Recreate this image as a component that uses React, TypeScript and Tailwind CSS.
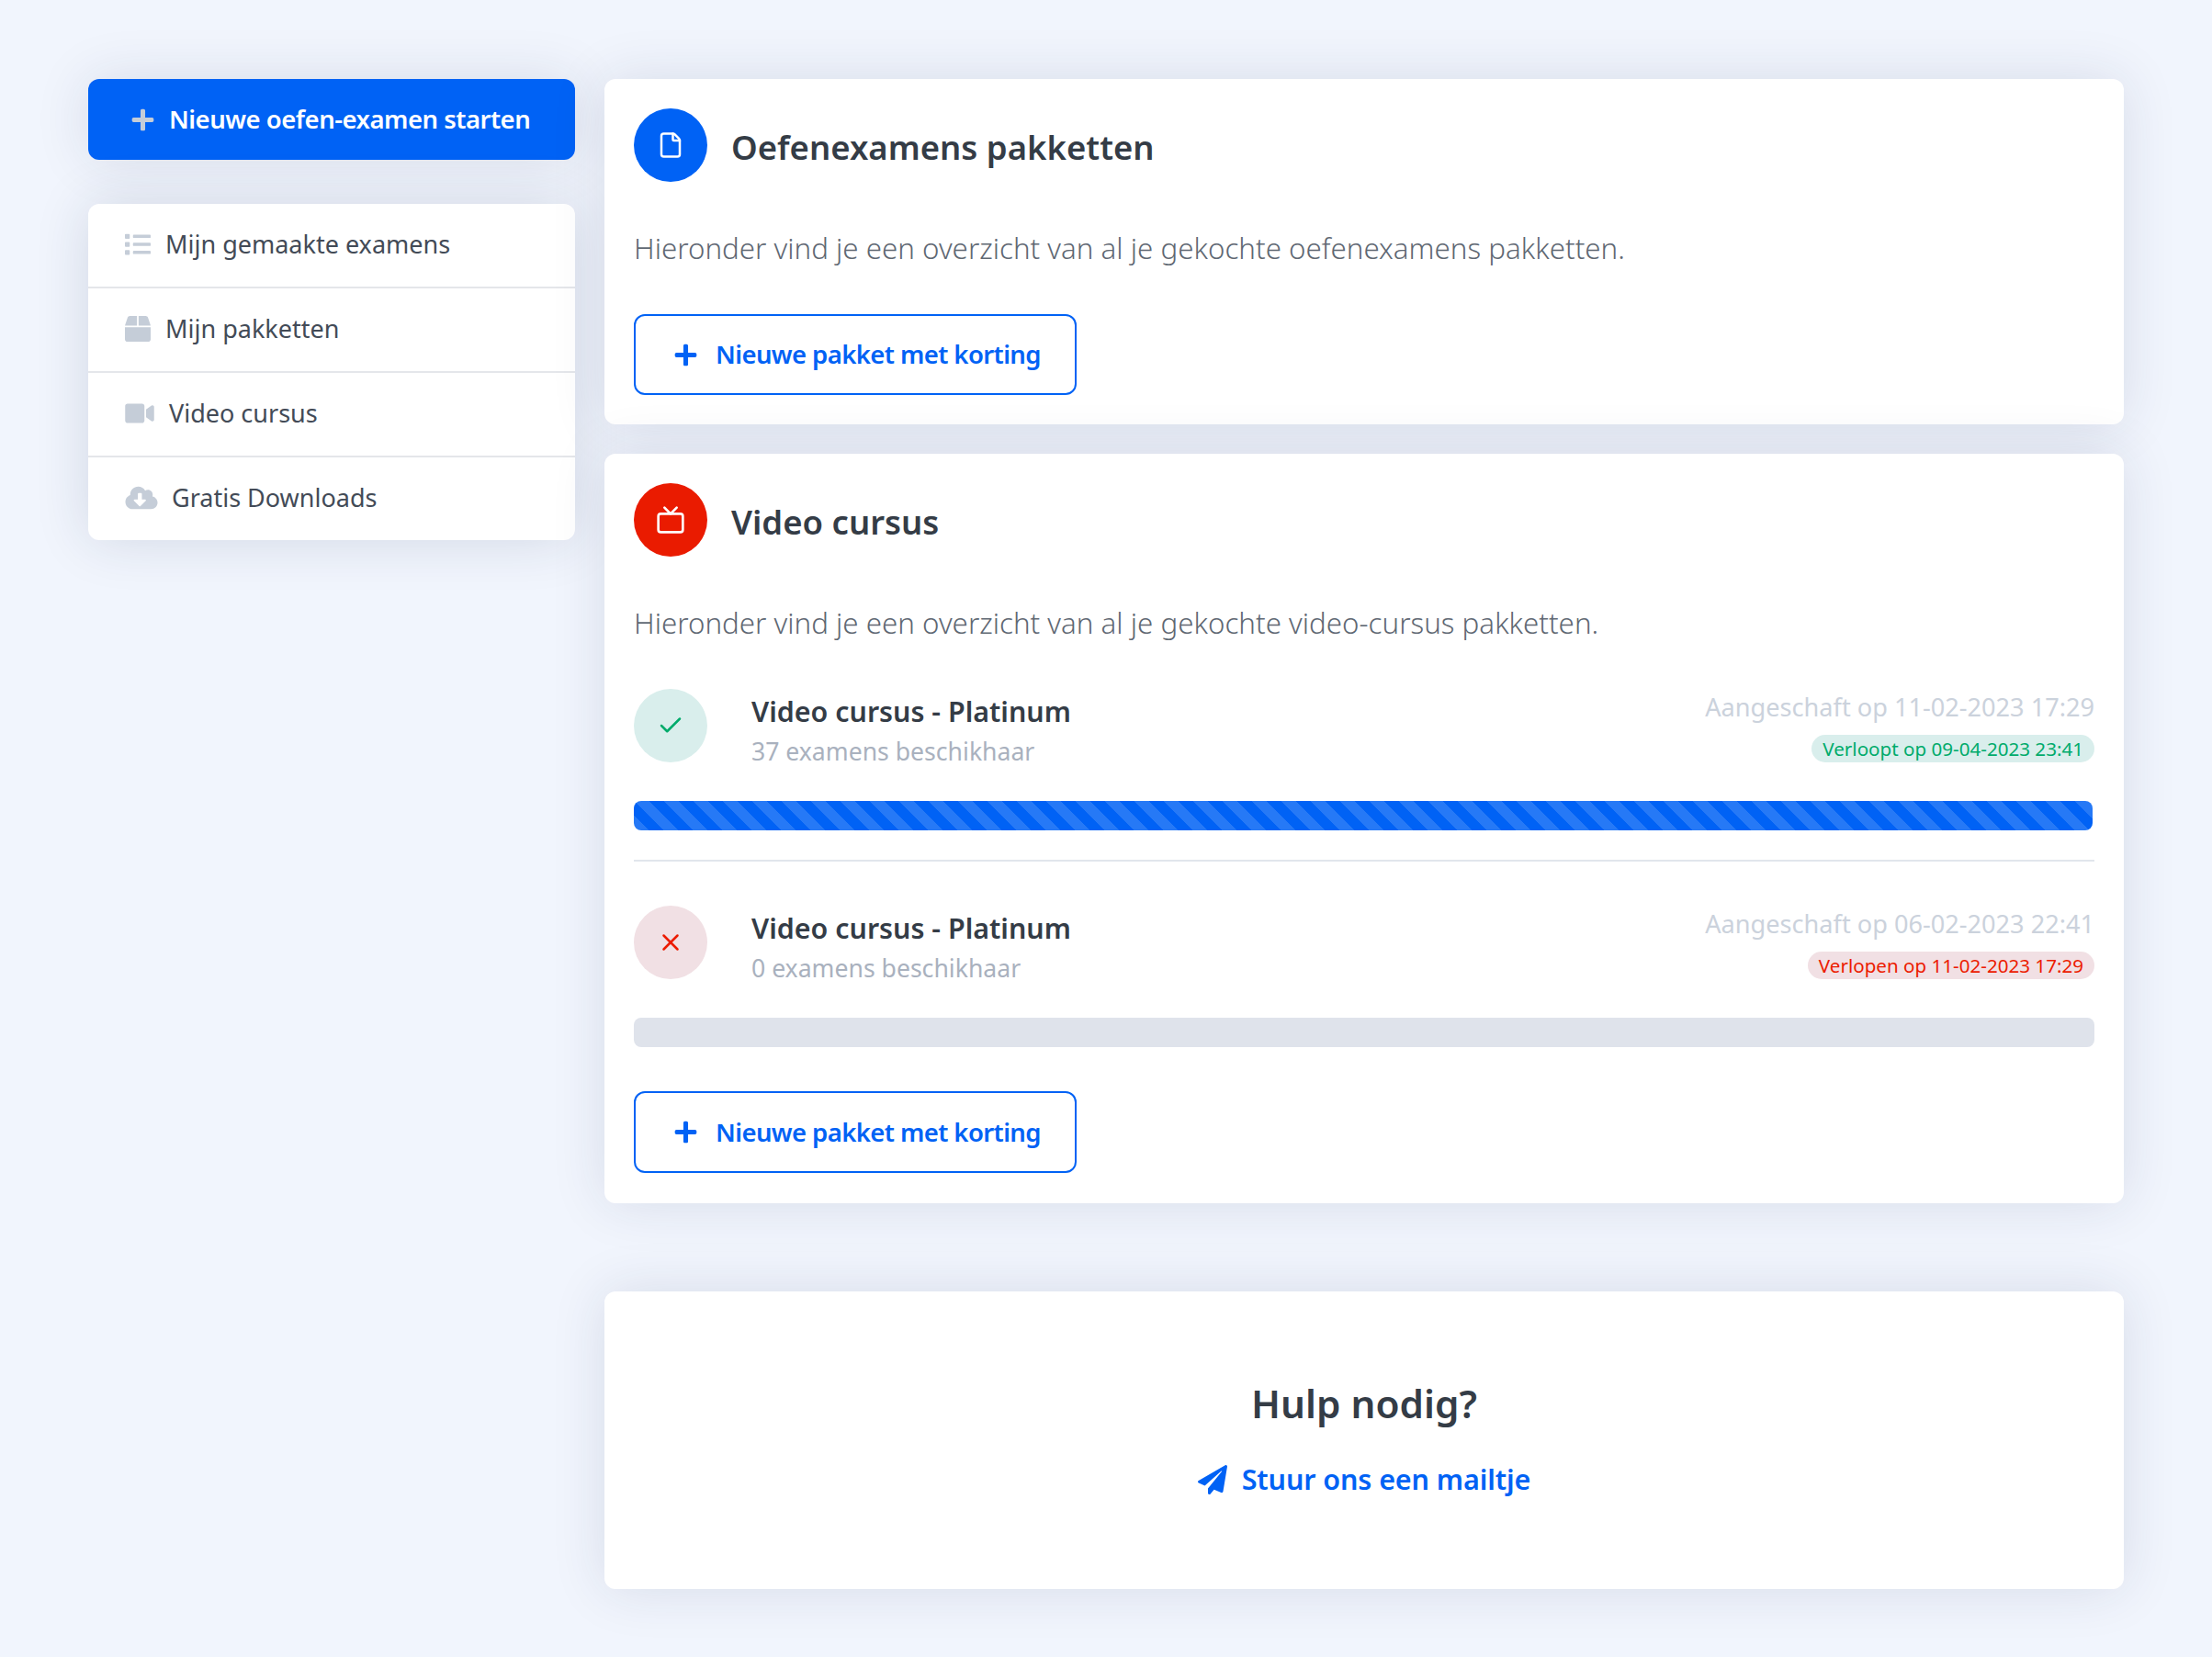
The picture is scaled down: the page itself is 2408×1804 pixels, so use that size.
import { ReactNode } from "react";
import { Check, File, Tv, X } from "lucide-react";
import { FaBox, FaCloudDownloadAlt, FaList, FaPaperPlane, FaPlus, FaVideo } from "react-icons/fa";

const cardClass = "rounded-xl bg-white p-8 shadow-[0_0_60px_rgba(30,45,80,0.12)]";

function NewPackageButton({ tall }: { tall?: boolean }) {
  return (
    <button className={`flex w-[482px] items-center rounded-xl border-2 border-[#0062f5] pl-[41px] text-[#0062f5] ${tall ? "h-[89px]" : "h-[88px]"}`}>
      <FaPlus className="h-[27px] w-[27px]" />
      <span className="ml-[19px] text-[27.5px] font-semibold tracking-[-0.6px]">Nieuwe pakket met korting</span>
    </button>
  );
}

function CardHeader({ icon, color, title }: { icon: ReactNode; color: string; title: string }) {
  return (
    <div className="flex items-center gap-[26px]">
      <div className={`flex h-20 w-20 items-center justify-center rounded-full text-white ${color}`}>{icon}</div>
      <h2 className="pt-1 text-[36.5px] font-semibold text-[#343c46]">{title}</h2>
    </div>
  );
}

function MenuItem({ icon, label, gap }: { icon: ReactNode; label: string; gap: string }) {
  return (
    <div className="flex h-[92px] items-center border-b-2 border-[#e4e6ea] pb-[2px] pl-10 last:h-[90px] last:border-b-0">
      <span className="text-[#c5cdd8]">{icon}</span>
      <span className={`text-[27px] text-[#434b57] ${gap}`}>{label}</span>
    </div>
  );
}

function PackageRow({ active, bought, expires, count }: { active: boolean; bought: string; expires: string; count: string }) {
  return (
    <div className="flex h-20 items-center">
      <div className={`flex h-20 w-20 items-center justify-center rounded-full ${active ? "bg-[#d9eeec] text-[#00ab6b]" : "bg-[#f1e0e4] text-[#ec1c00]"}`}>
        {active ? <Check className="h-[30px] w-[30px]" strokeWidth={2} /> : <X className="h-[30px] w-[30px]" strokeWidth={2} />}
      </div>
      <div className="ml-12 flex flex-col pt-[12px]">
        <span className="text-[30.4px] font-semibold leading-[44px] text-[#343c46]">Video cursus - Platinum</span>
        <span className="text-[26.6px] leading-[42px] text-[#a9b1be]">{count}</span>
      </div>
      <div className="ml-auto flex flex-col items-end">
        <span className="text-[27.15px] leading-[40px] text-[#cbd2dc]">{bought}</span>
        <span className={`mt-[10px] rounded-full px-3 text-[20.6px] leading-[30px] ${active ? "bg-[#d9eeec] text-[#00ab6b]" : "bg-[#f1e0e4] text-[#ec1c00]"}`}>{expires}</span>
      </div>
    </div>
  );
}

export default function App() {
  return (
    <div className="min-h-screen bg-[#f1f5fd] pl-[96px] pt-[86px] font-['Noto_Sans',sans-serif]">
      <div className="flex gap-8">
        <aside className="w-[530px]">
          <button className="flex h-[88px] w-full items-center rounded-xl bg-[#0062f5] pl-[46px] shadow-[0_0_60px_rgba(30,45,80,0.12)]">
            <FaPlus className="h-[27px] w-[27px] text-[#c5cdd8]" />
            <span className="ml-[15px] text-[27.5px] font-semibold tracking-[-0.5px] text-white">Nieuwe oefen-examen starten</span>
          </button>
          <nav className="mt-12 overflow-hidden rounded-xl bg-white shadow-[0_0_60px_rgba(30,45,80,0.14)]">
            <MenuItem icon={<FaList className="h-[28px] w-[28px]" />} label="Mijn gemaakte examens" gap="ml-[16px]" />
            <MenuItem icon={<FaBox className="h-[28px] w-[28px]" />} label="Mijn pakketten" gap="ml-[16px]" />
            <MenuItem icon={<FaVideo className="h-[28px] w-[32px]" />} label="Video cursus" gap="ml-[16px]" />
            <MenuItem icon={<FaCloudDownloadAlt className="h-[28px] w-[36px]" />} label="Gratis Downloads" gap="ml-[15px]" />
          </nav>
        </aside>

        <main className="flex w-[1654px] flex-col">
          <section className={cardClass}>
            <CardHeader color="bg-[#0062f5]" title="Oefenexamens pakketten" icon={<File className="h-[30px] w-[30px]" strokeWidth={2} />} />
            <p className="mt-12 text-[31.3px] font-light leading-[48px] text-[#5f6873]">
              Hieronder vind je een overzicht van al je gekochte oefenexamens pakketten.
            </p>
            <div className="mt-12">
              <NewPackageButton />
            </div>
          </section>

          <section className={`${cardClass} mt-8 pb-[33px]`}>
            <CardHeader color="bg-[#ea1b00]" title="Video cursus" icon={<Tv className="h-[32px] w-[32px]" strokeWidth={2} />} />
            <p className="mt-12 text-[31.3px] font-light leading-[48px] text-[#5f6873]">
              Hieronder vind je een overzicht van al je gekochte video-cursus pakketten.
            </p>
            <div className="mt-12">
              <PackageRow active bought="Aangeschaft op 11-02-2023 17:29" expires="Verloopt op 09-04-2023 23:41" count="37 examens beschikhaar" />
            </div>
            <div className="mr-[2px] mt-[42px] h-8 rounded-lg bg-[#0062f5] bg-[linear-gradient(45deg,rgba(255,255,255,.15)_25%,transparent_25%,transparent_50%,rgba(255,255,255,.15)_50%,rgba(255,255,255,.15)_75%,transparent_75%)] bg-[length:32px_32px]" />
            <div className="mt-8 h-0.5 bg-[#e1e6ec]" />
            <div className="mt-12">
              <PackageRow active={false} bought="Aangeschaft op 06-02-2023 22:41" expires="Verlopen op 11-02-2023 17:29" count="0 examens beschikhaar" />
            </div>
            <div className="mt-[42px] h-8 rounded-lg bg-[#dfe3eb]" />
            <div className="mt-12">
              <NewPackageButton tall />
            </div>
          </section>

          <section className={`${cardClass} mt-24 flex h-[324px] flex-col items-center`}>
            <h2 className="mt-[60px] text-[42.3px] font-semibold leading-[60px] text-[#343c46]">Hulp nodig?</h2>
            <a className="mt-[30px] flex items-center text-[#0062f5]">
              <FaPaperPlane className="h-[32px] w-[32px]" />
              <span className="ml-4 text-[30.5px] font-semibold tracking-[-0.1px]">Stuur ons een mailtje</span>
            </a>
          </section>
        </main>
      </div>
    </div>
  );
}
